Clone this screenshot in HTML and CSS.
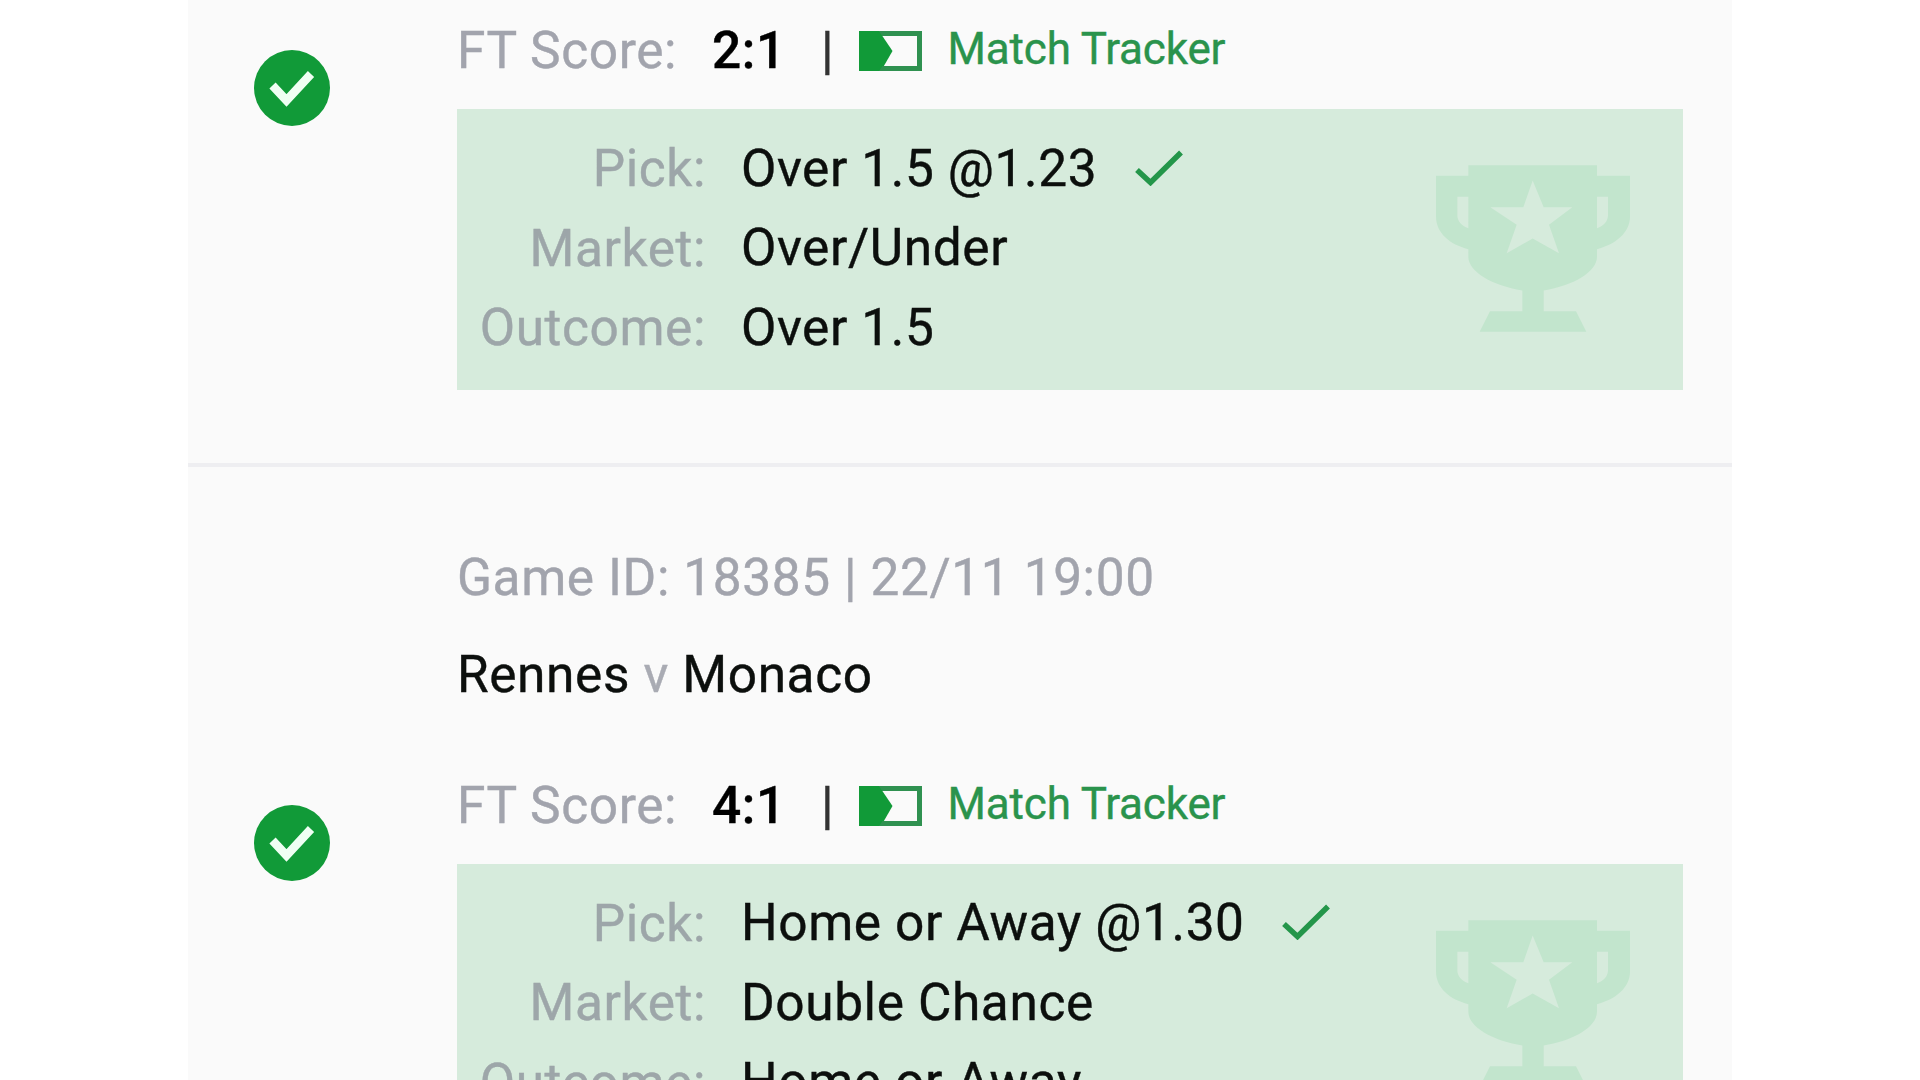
FILE: index.html
```html
<!DOCTYPE html>
<html lang="en">
<head>
    <meta charset="UTF-8">
    <meta name="viewport" content="width=device-width, initial-scale=1.0">
    <title>Bet Details</title>
    <link rel="stylesheet" href="styles.css">
</head>
<body>
    <!-- shared icons -->
    <svg class="icons">
        <symbol id="won" viewBox="0 0 76 76">
            <circle cx="38" cy="38" r="38" fill="#119a38"/>
            <path d="M18.5 35.5L32.5 50.5L57 24" fill="none" stroke="#effff3" stroke-width="8.5"/>
        </symbol>
        <symbol id="tracker" viewBox="0 0 63 40">
            <rect x="2.5" y="2.5" width="58" height="35" fill="none" stroke="#2f9150" stroke-width="5"/>
            <path d="M0 0H20L33.5 20L22 40H0Z" fill="#119a38"/>
            <path d="M20 0H63V5H23.5ZM20 40H63V35H23.5Z" fill="#2f9150"/>
        </symbol>
        <symbol id="tick" viewBox="0 0 48 36">
            <path d="M2 20L15.500 32.500L46 2.500" fill="none" stroke="#24964a" stroke-width="5.5"/>
        </symbol>
        <symbol id="trophy" viewBox="108 195 582 500">
            <path fill="#c2e5cd" fill-rule="evenodd" d="M205 195H591V227H690V350C690 398 645 434 591 447V470C591 515 520 557 431 571V633H528L559 695H239L270 633H367V571C278 557 205 515 205 470V447C150 434 108 398 108 350V227H205ZM172 290V345C172 362 184 376 205 384V290ZM591 290V384C612 376 624 362 624 345V290ZM398 241L370 321H271L350 374L320 459L398 415L477 459L447 374L517 321H431Z"/>
        </symbol>
    </svg>

    <div class="container">
        <div class="bet">
            <div class="result">
                <div class="status"><svg class="won"><use href="#won"/></svg></div>
                <div class="details">
                    <div class="score">
                        <span class="label">FT Score:</span>
                        <span class="goals">2:1</span>
                        <span class="line">|</span>
                        <svg class="tracker"><use href="#tracker"/></svg>
                        <a class="match">Match Tracker</a>
                    </div>
                    <div class="pick">
                        <div class="rows">
                            <span class="name">Pick:</span>
                            <span class="value">Over 1.5 @1.23<svg class="tick"><use href="#tick"/></svg></span>
                            <span class="name">Market:</span>
                            <span class="value">Over/Under</span>
                            <span class="name">Outcome:</span>
                            <span class="value">Over 1.5</span>
                        </div>
                        <svg class="trophy"><use href="#trophy"/></svg>
                    </div>
                </div>
            </div>
        </div>

        <div class="bet">
            <p class="game">Game ID: 18385 | 22/11 19:00</p>
            <p class="teams">Rennes <span class="versus">v</span> Monaco</p>
            <div class="result">
                <div class="status"><svg class="won"><use href="#won"/></svg></div>
                <div class="details">
                    <div class="score">
                        <span class="label">FT Score:</span>
                        <span class="goals">4:1</span>
                        <span class="line">|</span>
                        <svg class="tracker"><use href="#tracker"/></svg>
                        <a class="match">Match Tracker</a>
                    </div>
                    <div class="pick">
                        <div class="rows">
                            <span class="name">Pick:</span>
                            <span class="value">Home or Away @1.30<svg class="tick"><use href="#tick"/></svg></span>
                            <span class="name">Market:</span>
                            <span class="value">Double Chance</span>
                            <span class="name">Outcome:</span>
                            <span class="value">Home or Away</span>
                        </div>
                        <svg class="trophy"><use href="#trophy"/></svg>
                    </div>
                </div>
            </div>
        </div>
    </div>
</body>
</html>
```
FILE: styles.css
```css
body{
    margin:0px;
    height:1080px;
    overflow:hidden;
    background-color:white;
    font-family:Roboto, sans-serif;
    font-size:51.4px;
    line-height:80px;
    letter-spacing:0.6px;
    color:#0c0f0d;
    -webkit-text-stroke:0.4px;
}
svg{
    display:block;
    flex-shrink:0;
}
p{
    margin:0px;
}
.icons{
    display:none;
}
.container{
    width:1544px;
    height:1080px;
    margin-left:188px;
    overflow:hidden;
    background-color:#fafafa;
}
.bet{
    padding-bottom:73px;
    border-bottom:4px solid #eeeef1;
}
.game{
    padding:71px 0px 17px 269px;
    color:#a2a4ad;
}
.teams{
    padding:0px 0px 39.5px 269px;
}
.versus{
    color:#a9abb3;
}
.result{
    display:flex;
}
.status{
    width:269px;
}
.won{
    width:76px;
    height:76px;
    margin:50px 0px 0px 66px;
}
.details{
    width:1226px;
}
.score{
    display:flex;
    align-items:center;
    height:80px;
    padding:11px 0px 18px;
    white-space:nowrap;
}
.label{
    width:255px;
    color:#a2a4ad;
}
.goals{
    width:109px;
    font-weight:500;
    color:black;
}
.line{
    width:38px;
    color:#333;
}
.tracker{
    width:63px;
    height:40px;
}
.match{
    padding-bottom:4px;
    margin-left:25.5px;
    font-size:44px;
    letter-spacing:-0.15px;
    color:#2a934c;
}
/* green box */
.pick{
    display:flex;
    justify-content:space-between;
    height:261px;
    padding:20px 53px 0px 0px;
    background-color:#d6ebdc;
}
.rows{
    display:grid;
    grid-template-columns:249px auto;
    grid-auto-rows:79.5px;
    column-gap:35px;
    line-height:80px;
    white-space:nowrap;
}
.name{
    text-align:right;
    color:#9da6a9;
}
.value{
    display:flex;
    align-items:center;
}
.tick{
    width:48px;
    height:36px;
    margin:0px 0px 2px 37.5px;
}
.trophy{
    width:194px;
    height:167px;
    margin-top:36px;
}
```
